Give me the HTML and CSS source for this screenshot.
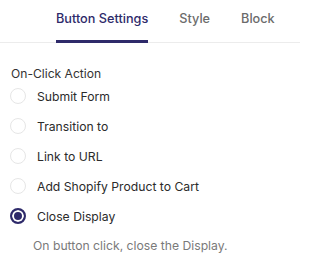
FILE: index.html
```html
<!DOCTYPE html>
<html>
<head>
<meta charset="utf-8">
<link rel="stylesheet" href="styles.css">
</head>
<body>
<div class="panel">
  <nav class="tabs">
    <div class="tab active">Button Settings</div>
    <div class="tab">Style</div>
    <div class="tab">Block</div>
  </nav>
  <section class="content">
    <div class="section-label">On-Click Action</div>
    <div class="options">
      <label class="option"><span class="radio"></span><span class="opt-text">Submit Form</span></label>
      <label class="option"><span class="radio"></span><span class="opt-text">Transition to</span></label>
      <label class="option"><span class="radio"></span><span class="opt-text">Link to URL</span></label>
      <label class="option"><span class="radio"></span><span class="opt-text">Add Shopify Product to Cart</span></label>
      <label class="option"><span class="radio checked"></span><span class="opt-text">Close Display</span></label>
    </div>
    <div class="hint">On button click, close the Display.</div>
  </section>
</div>
</body>
</html>
```

FILE: styles.css
```css
* { box-sizing: border-box; }
html, body { margin: 0; padding: 0; background: #fff; }
body {
  font-family: Inter, "Noto Sans", sans-serif;
  color: #2b2b2b;
  width: 300px;
  height: 266px;
  overflow: hidden;
}
.tabs {
  display: flex;
  gap: 31px;
  padding-left: 56px;
  border-bottom: 1px solid #ececec;
  height: 43px;
}
.tab {
  font-size: 12.7px;
  font-weight: 500;
  color: #6b6b6b;
  padding-top: 11px;
  height: 43px;
  border-bottom: 3px solid transparent;
  margin-bottom: -1px;
}
.tab.active {
  color: #2e2a6a;
  border-bottom-color: #2e2a6a;
}
.content {
  padding: 23px 0 0 11px;
}
.section-label {
  font-size: 12.1px;
  color: #333;
  line-height: 16px;
}
.options {
  display: flex;
  flex-direction: column;
  gap: 14px;
  margin-top: 6px;
}
.option {
  display: flex;
  align-items: center;
  gap: 11px;
  height: 16px;
  margin-left: -1px;
  font-size: 12.2px;
  color: #2b2b2b;
}
.radio {
  width: 16px;
  height: 16px;
  border-radius: 50%;
  border: 1px solid #e6e6e6;
  flex: none;
}
.radio.checked {
  border: 2px solid #2e2a6a;
  background: #2e2a6a;
  box-shadow: inset 0 0 0 2px #fff;
}
.hint {
  margin-top: 14px;
  padding-left: 22px;
  font-size: 12.2px;
  color: #7a7a7a;
}
```
